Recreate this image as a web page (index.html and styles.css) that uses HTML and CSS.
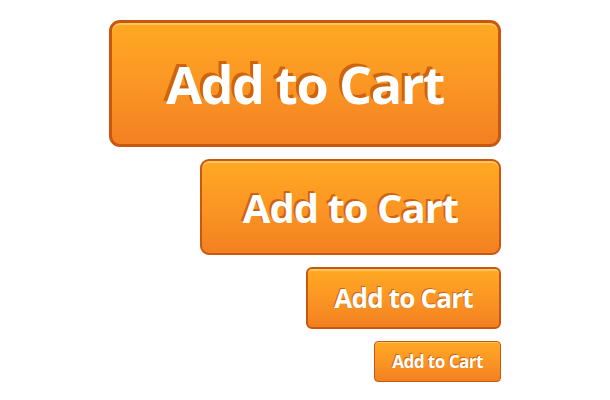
FILE: index.html
```html
<!DOCTYPE html>
<html lang="en">
<head>
    <meta charset="UTF-8">
    <title>Add to Cart buttons</title>
    <link rel="stylesheet" href="styles.css">
</head>
<body>
    <div class="button-stack">
        <button class="cart-btn cart-btn-xl">Add to Cart</button>
        <button class="cart-btn cart-btn-lg">Add to Cart</button>
        <button class="cart-btn cart-btn-md">Add to Cart</button>
        <button class="cart-btn cart-btn-sm">Add to Cart</button>
    </div>
</body>
</html>
```

FILE: styles.css
```css
body {
    margin: 0;
    background: #fff;
    font-family: "Open Sans", "DejaVu Sans", sans-serif;
}

.button-stack {
    width: 501px;
    padding-top: 20px;
    display: flex;
    flex-direction: column;
    align-items: flex-end;
    gap: 12px;
}

.cart-btn {
    display: flex;
    align-items: center;
    justify-content: center;
    box-sizing: border-box;
    padding: 0;
    font-family: inherit;
    font-weight: 700;
    color: #fff;
    border: 3px solid #c9580e;
    background: linear-gradient(to bottom, #ffa922 0%, #fb9624 50%, #f38021 100%);
    box-shadow: inset 0 2px 0 #ffc460;
    cursor: pointer;
}

.cart-btn-xl {
    width: 392px;
    height: 127px;
    border-radius: 11px;
    font-size: 52px;
    letter-spacing: -1.5px;
    text-shadow: -3px -3px 0 #cd640f;
}

.cart-btn-lg {
    width: 301px;
    height: 96px;
    border-width: 2px;
    border-radius: 9px;
    font-size: 40px;
    letter-spacing: -1px;
    text-shadow: -2px -2px 0 #cd640f;
}

.cart-btn-md {
    width: 195px;
    height: 62px;
    border-width: 2px;
    border-radius: 6px;
    font-size: 26px;
    letter-spacing: -0.8px;
    text-shadow: -1px -1px 0 #cd640f;
}

.cart-btn-sm {
    width: 127px;
    height: 41px;
    border-width: 1px;
    border-radius: 4px;
    font-size: 17px;
    letter-spacing: -0.5px;
    text-shadow: -1px -1px 0 #cd640f;
    box-shadow: inset 0 1px 0 #ffc460;
}
```
